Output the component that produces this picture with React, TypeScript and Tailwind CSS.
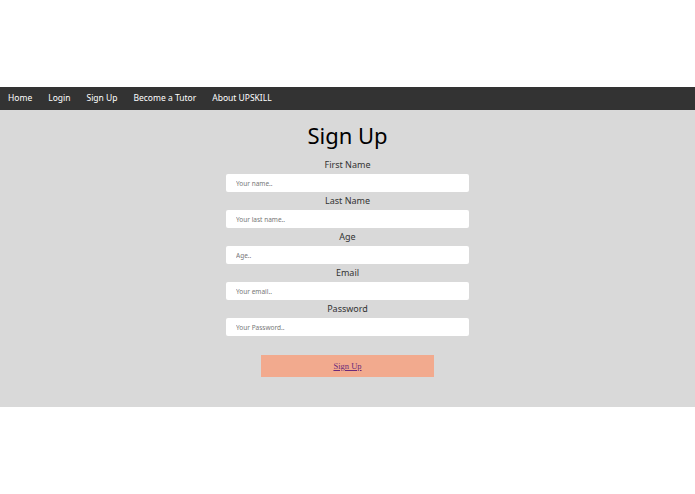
import React from 'react';

const navLinks = ['Home', 'Login', 'Sign Up', 'Become a Tutor', 'About UPSKILL'];

const fields = [
  { label: 'First Name', placeholder: 'Your name..', type: 'text' },
  { label: 'Last Name', placeholder: 'Your last name..', type: 'text' },
  { label: 'Age', placeholder: 'Age..', type: 'text' },
  { label: 'Email', placeholder: 'Your email..', type: 'email' },
  { label: 'Password', placeholder: 'Your Password..', type: 'password' },
];

export default function App() {
  return (
    <div className="h-[494px] w-full bg-white font-['Noto_Sans',sans-serif]">
      <div className="h-[87px]" />

      <nav className="flex h-[23px] items-center gap-[16px] bg-[#333333] pl-[8px] text-[8.5px] text-white">
        {navLinks.map((link) => (
          <a key={link} href="#" className="leading-none">
            {link}
          </a>
        ))}
      </nav>

      <main className="flex h-[297px] flex-col items-center bg-[#d9d9d9] pt-[10px]">
        <h1 className="text-[22px] leading-[30px] text-black">Sign Up</h1>

        <form className="mt-[6px] flex w-[243px] flex-col items-center">
          {fields.map((field) => (
            <div key={field.label} className="flex w-full flex-col items-center">
              <label className="h-[18px] text-[9px] leading-[18px] text-[#333333]">{field.label}</label>
              <input
                type={field.type === 'password' ? 'text' : field.type}
                placeholder={field.placeholder}
                className="h-[18px] w-full rounded-[2px] bg-white px-[10px] text-[6.5px] placeholder:text-[#777777] focus:outline-none"
              />
            </div>
          ))}

          <button
            type="button"
            className="mt-[19px] flex h-[22px] w-[173px] items-center justify-center bg-[#f2aa8e]"
          >
            <a href="#" className="font-['Liberation_Serif',serif] text-[8.5px] text-[#6b2a7a] underline">
              Sign Up
            </a>
          </button>
        </form>
      </main>
    </div>
  );
}
